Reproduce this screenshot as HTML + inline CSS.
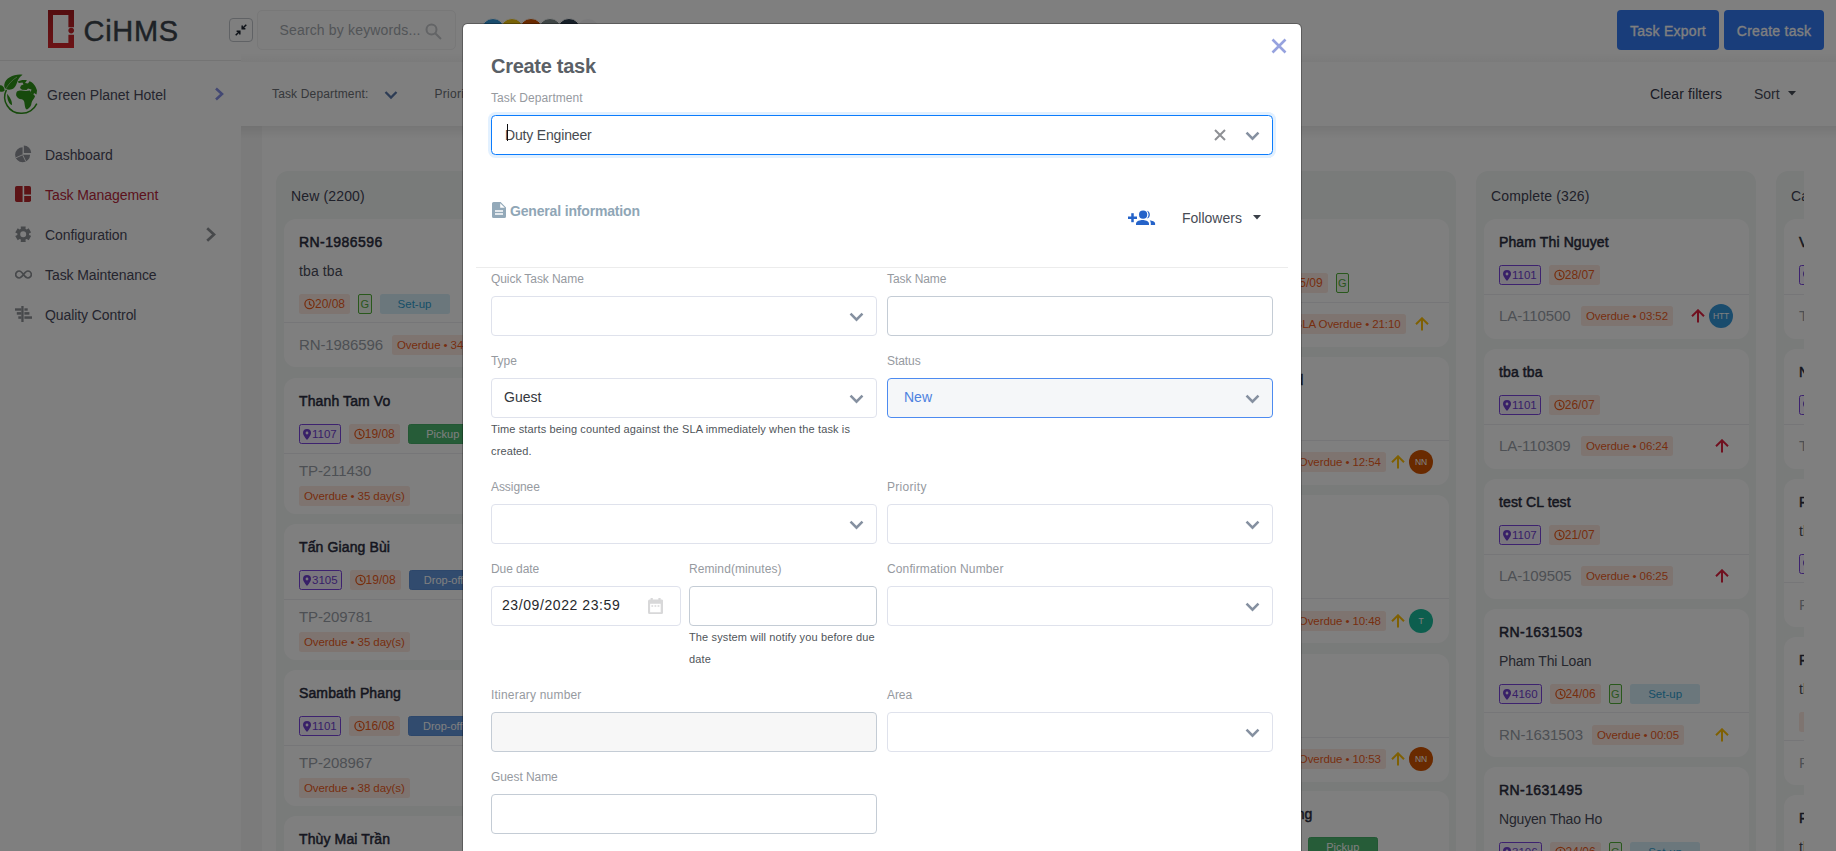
<!DOCTYPE html>
<html lang="en">
<head>
<meta charset="utf-8">
<title>CiHMS - Task Management</title>
<style>
*{box-sizing:border-box;margin:0;padding:0}
html,body{width:1836px;height:851px;overflow:hidden;background:#fff}
body{font-family:"Liberation Sans",sans-serif;font-size:14px;color:#34395e;position:relative}
.abs{position:absolute}
svg{display:block}
/* ---------- underlying app ---------- */
#app{position:absolute;left:0;top:0;width:1836px;height:851px;overflow:hidden;background:#fff}
#side{position:absolute;left:0;top:0;width:241px;height:851px;background:#fff}
#side .logo{position:absolute;left:0;top:0;width:241px;height:61px;border-bottom:1px solid #e9e9e9}
#side .brand{position:absolute;left:83.5px;top:12.6px;font-size:29px;line-height:36px;color:#3c454d;letter-spacing:.7px;-webkit-text-stroke:.45px #3c454d}
#side .hotel{position:absolute;left:47px;top:84.6px;line-height:20px;font-size:14px;color:#4a4a5c}
.nav{position:absolute;left:0;width:241px;height:40px}
.nav .ic{position:absolute;left:15px;top:12px;width:16px;height:16px}
.nav .tx{position:absolute;left:45px;top:10.6px;line-height:20px;font-size:14px;color:#4a4a5c;white-space:nowrap;letter-spacing:-.08px}
.nav.act .tx{color:#b8263a}
#top{position:absolute;left:241px;top:0;width:1595px;height:61px;background:#fff}
#top:after{content:"";position:absolute;left:0;top:52px;width:100%;height:10px;background:linear-gradient(rgba(0,0,0,0),rgba(0,0,0,.035))}
#filter{position:absolute;left:241px;top:62px;width:1595px;height:64px;background:#fff}
#filter:after{content:"";position:absolute;left:0;top:64px;width:100%;height:13px;background:linear-gradient(rgba(0,0,0,.075),rgba(0,0,0,0))}
.btn{position:absolute;top:10px;height:40px;border-radius:4px;background:#327af4;color:#fff;font-size:14px;line-height:42px;text-align:center;letter-spacing:.25px;-webkit-text-stroke:.3px #fff}
#board{position:absolute;left:262px;top:140px;width:1542px;height:711px;overflow:hidden;background:#fff}
.col{position:absolute;top:31px;width:280px;height:760px;border-radius:12px;background:#f3f6f5}
.col h4{position:absolute;left:15px;top:15px;font-size:14px;font-weight:400;line-height:20px;color:#3f4254;white-space:nowrap;letter-spacing:.15px}
.card{position:absolute;left:8px;width:265px;border-radius:12px;background:#fff;overflow:hidden}
.card .t{position:absolute;left:15px;top:13px;height:20px;line-height:20px;font-weight:400;font-size:14px;color:#2b2d3e;white-space:nowrap;letter-spacing:.12px;-webkit-text-stroke:.5px #2b2d3e}
.card .s{position:absolute;left:15px;top:42px;height:20px;line-height:20px;font-size:14px;color:#4a4c5a;white-space:nowrap;letter-spacing:-.18px}
.card .tags{position:absolute;left:15px;top:46px;height:20px;white-space:nowrap;font-size:0}
.card .hr{position:absolute;left:0;right:0;top:75px;height:1px;background:#ececf0}
.card .id{position:absolute;left:15px;top:87px;height:20px;line-height:20px;font-size:15px;color:#9aa0a8;white-space:nowrap;letter-spacing:-.1px}
.card .od{position:absolute;top:87px;left:97px}
.card.sub .tags{top:75px}
.card.sub .hr{top:103px}
.card.sub .id{top:116px}
.card.sub .od{top:116px}
.card.two .id{top:83px}
.card.two .od{top:108px;left:15px}
.tag{display:inline-block;vertical-align:top;height:20px;line-height:20px;font-size:12px;border-radius:2.5px;margin-right:8px;white-space:nowrap;text-align:center}
.tag svg{display:inline-block;vertical-align:top}
.tm,.ov{background:#fde9e1;color:#ee5d1d;padding:0 5px}
.ov{font-size:11.5px;letter-spacing:-.09px}
.tm svg{margin-top:4px;margin-right:0}
.lc{border:1px solid #7b45de;color:#7040d0;background:#f4effd;line-height:18px;padding:0 3px 0 3px;font-size:11.5px}
.lc svg{margin-top:4px;margin-right:1px}
.g{border:1px solid #52b038;color:#55ad40;background:#f0f8ec;width:13.5px;font-size:11px;line-height:18px;border-radius:2px}
.su{background:#d7eef9;color:#2e9fd0;width:70px;font-size:11.5px}
.pk{background:#4cb870;color:#fff;width:70px;font-size:11px;border:1px solid #46ae68;line-height:18px}
.do{background:#6296dc;color:#fff;width:70px;font-size:11px;border:1px solid #5a8ed6;line-height:18px}
.av{position:absolute;width:24px;height:24px;border-radius:50%;color:#fff;font-size:8.5px;line-height:24px;text-align:center;font-weight:400;letter-spacing:-.2px}
.ar{position:absolute;width:14px;height:14px}
/* ---------- backdrop + modal ---------- */
#backdrop{position:absolute;left:0;top:0;width:1836px;height:851px;background:rgba(0,0,0,.5)}
#modal{position:absolute;left:462px;top:23px;width:840px;height:900px;background:#fff;border:1px solid rgba(0,0,0,.27);border-radius:5.5px;background-clip:padding-box}
#modal .in{position:absolute;left:-463px;top:-24px;width:1836px;height:851px}
.lab{position:absolute;font-size:12px;line-height:16px;color:#969a9f;white-space:nowrap;letter-spacing:-.07px}
.inp{position:absolute;height:40px;border:1px solid #dfe2ec;border-radius:4px;background:#fff}
.inp.g2{border-color:#c4ccd5}
.inp .v{position:absolute;left:12px;top:8.3px;line-height:20px;font-size:14px;color:#34373c;white-space:nowrap}
.chev{position:absolute;right:12.5px;top:15px;width:15px;height:9.6px}
.help{position:absolute;font-size:11px;line-height:22px;color:#50555a;white-space:nowrap;letter-spacing:.13px}
</style>
</head>
<body>
<div id="app">
  <div id="side">
    <div class="logo">
      <svg class="abs" style="left:48px;top:10px" width="26" height="38" viewBox="0 0 26 38">
        <defs><linearGradient id="lg" x1="0" y1="0" x2="0" y2="1"><stop offset="0" stop-color="#a81c20"/><stop offset="1" stop-color="#d8262c"/></linearGradient></defs>
        <path fill="url(#lg)" fill-rule="evenodd" d="M0 0H26V17.3H20.4V5H5V33H20.4V24.7H26V38H0Z"/>
        <circle cx="23.2" cy="20.6" r="2.8" fill="#c42228"/>
      </svg>
      <div class="brand">CiHMS</div>
    </div>
    <svg class="abs" style="left:0;top:70px" width="48" height="48" viewBox="0 0 48 48">
      <path d="M6.4 19.8A16.3 16.3 0 0 0 21.3 43.3A16.3 16.3 0 0 0 36.8 33.6" fill="none" stroke="#2e9418" stroke-width="1.5"/>
      <g fill="#2e9418">
        <path d="M22.6 4.8C15 3.6 5.5 7.5 4.3 14.5C4 16.5 4.6 18.3 6 19C8.5 20.3 12 19.8 14 18C18 14.5 16 9.5 22.6 4.8Z"/>
        <path d="M0 15.2C2.5 15.2 4.6 17.2 4.6 20.5C3 22.2 1 22 0 21.5Z"/>
        <path d="M7.2 23.7C9.5 27 12.3 30.5 12 35C9.5 34.5 6.8 30 7.2 23.7Z"/>
        <path d="M17.5 11.8C20 10 24 9.6 27 10.3L25 13L28 13.5L29.5 11.2C33 12.5 36 16 37 20.5L36.5 24.5L34 23L33 26L30.5 22.5L31.5 19.5L28 18.5L26.5 20L22 19.8L20 18L21 15.5L23.5 14.5L22.5 12.5L19 13Z"/>
        <path d="M17 21.5C19 20 23 20.5 26 21L30 20.5L31.5 23.5C33 24.5 35 25.2 35 26.5C34 29 32 30.5 31.5 33C31.5 36 29.5 38 27 39.5C25 39 25 36 24.5 33.5C24.5 31.5 23.5 30 22 29.3C19.5 29.5 17 28 16.2 25.5C16 24 16.3 22.5 17 21.5Z"/>
      </g>
      <path d="M5.5 19.5C8 14.5 12 10 17 7" fill="none" stroke="#fff" stroke-width=".6" opacity=".75"/>
    </svg>
    <div class="hotel">Green Planet Hotel</div>
    <svg class="abs" style="left:214px;top:87px" width="10" height="14" viewBox="0 0 10 14"><path d="M2 1.5L8 7L2 12.5" fill="none" stroke="#8791e6" stroke-width="2.6"/></svg>

    <div class="nav" style="top:134px">
      <svg class="abs" style="left:14px;top:11px" width="19" height="18" viewBox="0 0 19 18"><g fill="#90939a"><path d="M8.6 9.8V2.3A7.5 7.5 0 1 0 16.1 9.8Z"/><path d="M9.8 7.9V.5A7.4 7.4 0 0 1 17.2 7.9Z"/></g><path d="M8.6 9.8L1.7 12.9M8.6 9.8L11.9 16.6" stroke="#fff" stroke-width=".9" fill="none"/></svg>
      <div class="tx">Dashboard</div>
    </div>
    <div class="nav act" style="top:174px">
      <svg class="ic" viewBox="0 0 16 16"><g fill="#b8262c"><path d="M1.8 0H7.6V16H1.8A1.8 1.8 0 0 1 0 14.2V1.8A1.8 1.8 0 0 1 1.8 0Z"/><path d="M9.2 0H14.2A1.8 1.8 0 0 1 16 1.8V8.4H9.2Z"/><path d="M9.2 10H16V14.2A1.8 1.8 0 0 1 14.2 16H9.2Z"/></g></svg>
      <div class="tx">Task Management</div>
    </div>
    <div class="nav" style="top:214px">
      <svg class="abs" style="left:14.8px;top:11.6px" width="16.4" height="16.4" viewBox="0 0 16.4 16.4"><path fill="#8f9297" fill-rule="evenodd" d="M5.90 2.77 L5.71 0.44 L10.69 0.44 L10.50 2.77 L11.76 3.49 L13.68 2.17 L16.16 6.47 L14.05 7.47 L14.05 8.93 L16.16 9.93 L13.68 14.23 L11.76 12.91 L10.50 13.63 L10.69 15.96 L5.71 15.96 L5.90 13.63 L4.64 12.91 L2.72 14.23 L0.24 9.93 L2.35 8.93 L2.35 7.47 L0.24 6.47 L2.72 2.17 L4.64 3.49ZM8.2 5.2A3 3 0 1 0 8.2 11.2A3 3 0 1 0 8.2 5.2Z"/></svg>
      <div class="tx">Configuration</div>
      <svg class="abs" style="left:205px;top:13px" width="12" height="15" viewBox="0 0 12 15"><path d="M2.2 1.2L9 7.5L2.2 13.8" fill="none" stroke="#8f9297" stroke-width="2.7"/></svg>
    </div>
    <div class="nav" style="top:254px">
      <svg class="abs" style="left:15px;top:15.5px" width="17" height="9" viewBox="0 0 17 9"><path fill="none" stroke="#8f9297" stroke-width="1.7" d="M8.5 4.5C7 2.4 5.7 1 4.2 1A3.5 3.5 0 0 0 4.2 8C6 8 7.2 6.3 8.5 4.5C9.8 2.7 11 1 12.8 1A3.5 3.5 0 0 1 12.8 8C11.3 8 10 6.6 8.5 4.5Z"/></svg>
      <div class="tx">Task Maintenance</div>
    </div>
    <div class="nav" style="top:294px">
      <svg class="abs" style="left:15px;top:12px" width="17" height="16" viewBox="0 0 17 16"><g fill="#8f9297"><rect x="6.3" y="0" width="2.3" height="16"/><rect x="0" y="2.3" width="6.4" height="2.4"/><rect x="1.8" y="6.1" width="4.6" height="2.6"/><rect x="3.3" y="10.3" width="3.1" height="2.5"/><rect x="9.4" y="2.3" width="3.3" height="2.4"/><rect x="9.4" y="6.1" width="5" height="2.6"/><rect x="9.4" y="10.3" width="7.6" height="2.5"/></g></svg>
      <div class="tx">Quality Control</div>
    </div>
  </div>
  <div id="top">
    <div class="abs" style="left:-12px;top:18px;width:24px;height:24px;border:1px solid #c0c5cb;border-radius:4px;background:#fff">
      <svg class="abs" style="left:5px;top:5px" width="12" height="12" viewBox="0 0 12 12"><g fill="none" stroke="#1d2430" stroke-width="1.5"><path d="M11.3 .7L7.2 4.8M7.2 1.6V4.8H10.4"/><path d="M.7 11.3L4.8 7.2M4.8 10.4V7.2H1.6"/></g></svg>
    </div>
    <div class="abs" style="left:15.5px;top:10px;width:199.5px;height:40px;border:1px solid #f0f0f1;border-radius:5px;background:#fdfdfd">
      <div class="abs" style="left:22px;top:9px;line-height:20px;font-size:14px;color:#a4a9af;white-space:nowrap;letter-spacing:.16px">Search by keywords...</div>
      <svg class="abs" style="left:167px;top:12px" width="17" height="17" viewBox="0 0 17 17"><g fill="none" stroke="#c6c9cc" stroke-width="2"><circle cx="6.5" cy="6.5" r="5"/><path d="M10.2 10.2L16 16"/></g></svg>
    </div>
    <div class="av" style="left:240px;top:18px;background:#3498db;border:1px solid #fff"></div>
    <div class="av" style="left:259px;top:18px;background:#f1c40f;border:1px solid #fff"></div>
    <div class="av" style="left:278px;top:18px;background:#d35400;border:1px solid #fff"></div>
    <div class="av" style="left:297px;top:18px;background:#7f8c8d;border:1px solid #fff"></div>
    <div class="av" style="left:316px;top:18px;background:#2c3e50;border:1px solid #fff"></div>
    <div class="av" style="left:335px;top:18px;background:#f4f4f6;border:1px solid #fff"></div>
    <div class="btn" style="left:1376px;width:102px">Task Export</div>
    <div class="btn" style="left:1483px;width:100px">Create task</div>
  </div>
  <div id="filter">
    <div class="abs" style="left:31px;top:24px;line-height:16px;font-size:12px;color:#6c7076;white-space:nowrap;letter-spacing:.15px">Task Department:</div>
    <svg class="abs" style="left:143px;top:28px" width="14" height="10" viewBox="0 0 14 10"><path d="M1.5 2L7 7.5L12.5 2" fill="none" stroke="#5a79aa" stroke-width="2.3"/></svg>
    <div class="abs" style="left:193.5px;top:24px;line-height:16px;font-size:12px;color:#6c7076;white-space:nowrap;letter-spacing:.3px">Priority:</div>
    <div class="abs" style="left:1409px;top:22px;line-height:20px;font-size:14px;color:#34374a;white-space:nowrap;letter-spacing:.1px">Clear filters</div>
    <div class="abs" style="left:1513px;top:22px;line-height:20px;font-size:14px;color:#4a4d5c;white-space:nowrap">Sort</div>
    <svg class="abs" style="left:1547px;top:29px" width="8" height="5" viewBox="0 0 8 5"><path d="M0 0H8L4 4.5Z" fill="#444a55"/></svg>
  </div>
  <div class="abs" style="left:241px;top:126px;width:21px;height:725px;background:rgba(0,0,0,.03)"></div>
  <div id="board">
<div class="col" style="left:14px"><h4>New (2200)</h4><div class="card sub" style="top:48px;height:147.5px"><div class="t" style="letter-spacing:.42px">RN-1986596</div><div class="s" style="letter-spacing:.12px">tba tba</div><div class="tags"><span class="tag tm"><svg width="11" height="12" viewBox="0 0 11 12"><g fill="none" stroke="currentColor" stroke-width="1.3"><circle cx="5.5" cy="6" r="4.6"/><path d="M5.5 3.2V6.2L7.6 7.6"/></g></svg>20/08</span><span class="tag g">G</span><span class="tag su">Set-up</span></div><div class="hr"></div><div class="id">RN-1986596</div><div class="od" style="left:108px"><span class="tag ov" style="margin:0">Overdue &bull; 34 day(s)</span></div></div><div class="card two" style="top:207px;height:136px"><div class="t">Thanh Tam Vo</div><div class="tags"><span class="tag lc"><svg width="8" height="11" viewBox="0 0 8 11"><path fill="currentColor" fill-rule="evenodd" d="M4 0A4 4 0 0 1 8 4C8 6.6 4 11 4 11C4 11 0 6.6 0 4A4 4 0 0 1 4 0ZM4 2.6A1.4 1.4 0 1 0 4 5.4A1.4 1.4 0 1 0 4 2.6Z"/></svg>1107</span><span class="tag tm"><svg width="11" height="12" viewBox="0 0 11 12"><g fill="none" stroke="currentColor" stroke-width="1.3"><circle cx="5.5" cy="6" r="4.6"/><path d="M5.5 3.2V6.2L7.6 7.6"/></g></svg>19/08</span><span class="tag pk">Pickup</span></div><div class="hr"></div><div class="id">TP-211430</div><div class="od"><span class="tag ov" style="margin:0">Overdue &bull; 35 day(s)</span></div></div><div class="card two" style="top:353px;height:136px"><div class="t">Tấn Giang Bùi</div><div class="tags"><span class="tag lc"><svg width="8" height="11" viewBox="0 0 8 11"><path fill="currentColor" fill-rule="evenodd" d="M4 0A4 4 0 0 1 8 4C8 6.6 4 11 4 11C4 11 0 6.6 0 4A4 4 0 0 1 4 0ZM4 2.6A1.4 1.4 0 1 0 4 5.4A1.4 1.4 0 1 0 4 2.6Z"/></svg>3105</span><span class="tag tm"><svg width="11" height="12" viewBox="0 0 11 12"><g fill="none" stroke="currentColor" stroke-width="1.3"><circle cx="5.5" cy="6" r="4.6"/><path d="M5.5 3.2V6.2L7.6 7.6"/></g></svg>19/08</span><span class="tag do">Drop-off</span></div><div class="hr"></div><div class="id">TP-209781</div><div class="od"><span class="tag ov" style="margin:0">Overdue &bull; 35 day(s)</span></div></div><div class="card two" style="top:499px;height:136px"><div class="t">Sambath Phang</div><div class="tags"><span class="tag lc"><svg width="8" height="11" viewBox="0 0 8 11"><path fill="currentColor" fill-rule="evenodd" d="M4 0A4 4 0 0 1 8 4C8 6.6 4 11 4 11C4 11 0 6.6 0 4A4 4 0 0 1 4 0ZM4 2.6A1.4 1.4 0 1 0 4 5.4A1.4 1.4 0 1 0 4 2.6Z"/></svg>1101</span><span class="tag tm"><svg width="11" height="12" viewBox="0 0 11 12"><g fill="none" stroke="currentColor" stroke-width="1.3"><circle cx="5.5" cy="6" r="4.6"/><path d="M5.5 3.2V6.2L7.6 7.6"/></g></svg>16/08</span><span class="tag do">Drop-off</span></div><div class="hr"></div><div class="id">TP-208967</div><div class="od"><span class="tag ov" style="margin:0">Overdue &bull; 38 day(s)</span></div></div><div class="card two" style="top:645px;height:136px"><div class="t">Thùy Mai Trần</div><div class="tags"><span class="tag lc"><svg width="8" height="11" viewBox="0 0 8 11"><path fill="currentColor" fill-rule="evenodd" d="M4 0A4 4 0 0 1 8 4C8 6.6 4 11 4 11C4 11 0 6.6 0 4A4 4 0 0 1 4 0ZM4 2.6A1.4 1.4 0 1 0 4 5.4A1.4 1.4 0 1 0 4 2.6Z"/></svg>2104</span><span class="tag tm"><svg width="11" height="12" viewBox="0 0 11 12"><g fill="none" stroke="currentColor" stroke-width="1.3"><circle cx="5.5" cy="6" r="4.6"/><path d="M5.5 3.2V6.2L7.6 7.6"/></g></svg>15/08</span><span class="tag pk">Pickup</span></div><div class="hr"></div><div class="id">TP-208811</div><div class="od"><span class="tag ov" style="margin:0">Overdue &bull; 39 day(s)</span></div></div></div>
<div class="col" style="left:314px"><h4>Assigned (12)</h4></div>
<div class="col" style="left:614px"><h4>In progress (8)</h4></div>
<div class="col" style="left:914px"><h4>Pending (41)</h4><div class="card" style="top:48px;height:127.5px"><div class="t">Le Van Hoang</div><div class="tags" style="top:54px;left:42px"><span class="tag lc"><svg width="8" height="11" viewBox="0 0 8 11"><path fill="currentColor" fill-rule="evenodd" d="M4 0A4 4 0 0 1 8 4C8 6.6 4 11 4 11C4 11 0 6.6 0 4A4 4 0 0 1 4 0ZM4 2.6A1.4 1.4 0 1 0 4 5.4A1.4 1.4 0 1 0 4 2.6Z"/></svg>2208</span><span class="tag tm"><svg width="11" height="12" viewBox="0 0 11 12"><g fill="none" stroke="currentColor" stroke-width="1.3"><circle cx="5.5" cy="6" r="4.6"/><path d="M5.5 3.2V6.2L7.6 7.6"/></g></svg>15/09</span><span class="tag g">G</span></div><div class="hr" style="top:83px"></div><div class="id" style="top:95px">RN-2014</div><div class="od" style="top:95px;left:auto;right:43.5px"><span class="tag ov" style="margin:0">SLA Overdue &bull; 21:10</span></div><svg class="ar" style="left:231px;top:98px" viewBox="0 0 14 14"><path d="M7 13.5V1.5M1 7.2L7 1.3L13 7.2" fill="none" stroke="#ffc107" stroke-width="2"/></svg></div><div class="card" style="top:186px;height:127.5px"><div class="t" style="left:auto;right:145.5px">Minh Anh Do and</div><div class="tags" style="top:54px"><span class="tag lc"><svg width="8" height="11" viewBox="0 0 8 11"><path fill="currentColor" fill-rule="evenodd" d="M4 0A4 4 0 0 1 8 4C8 6.6 4 11 4 11C4 11 0 6.6 0 4A4 4 0 0 1 4 0ZM4 2.6A1.4 1.4 0 1 0 4 5.4A1.4 1.4 0 1 0 4 2.6Z"/></svg>1205</span><span class="tag tm"><svg width="11" height="12" viewBox="0 0 11 12"><g fill="none" stroke="currentColor" stroke-width="1.3"><circle cx="5.5" cy="6" r="4.6"/><path d="M5.5 3.2V6.2L7.6 7.6"/></g></svg>14/09</span></div><div class="hr" style="top:83px"></div><div class="id" style="top:95px">LA-1128</div><div class="od" style="top:95px;left:auto;right:63.2px"><span class="tag ov" style="margin:0">Overdue &bull; 12:54</span></div><div class="av" style="left:225px;top:93px;background:#d35400">NN</div><svg class="ar" style="left:207px;top:98px" viewBox="0 0 14 14"><path d="M7 13.5V1.5M1 7.2L7 1.3L13 7.2" fill="none" stroke="#ffc107" stroke-width="2"/></svg></div><div class="card sub" style="top:324px;height:147.5px"><div class="t" style="letter-spacing:.42px">RN-2011187</div><div class="s">Tran Van Long</div><div class="tags"><span class="tag lc"><svg width="8" height="11" viewBox="0 0 8 11"><path fill="currentColor" fill-rule="evenodd" d="M4 0A4 4 0 0 1 8 4C8 6.6 4 11 4 11C4 11 0 6.6 0 4A4 4 0 0 1 4 0ZM4 2.6A1.4 1.4 0 1 0 4 5.4A1.4 1.4 0 1 0 4 2.6Z"/></svg>3301</span><span class="tag tm"><svg width="11" height="12" viewBox="0 0 11 12"><g fill="none" stroke="currentColor" stroke-width="1.3"><circle cx="5.5" cy="6" r="4.6"/><path d="M5.5 3.2V6.2L7.6 7.6"/></g></svg>13/09</span></div><div class="hr"></div><div class="id">RN-2011</div><div class="od" style="left:auto;right:63.2px"><span class="tag ov" style="margin:0">Overdue &bull; 10:48</span></div><div class="av" style="left:225px;top:114px;background:#1abc9c">T</div><svg class="ar" style="left:207px;top:119px" viewBox="0 0 14 14"><path d="M7 13.5V1.5M1 7.2L7 1.3L13 7.2" fill="none" stroke="#ffc107" stroke-width="2"/></svg></div><div class="card" style="top:483px;height:127.5px"><div class="t">Quoc Bao</div><div class="tags" style="top:54px"><span class="tag lc"><svg width="8" height="11" viewBox="0 0 8 11"><path fill="currentColor" fill-rule="evenodd" d="M4 0A4 4 0 0 1 8 4C8 6.6 4 11 4 11C4 11 0 6.6 0 4A4 4 0 0 1 4 0ZM4 2.6A1.4 1.4 0 1 0 4 5.4A1.4 1.4 0 1 0 4 2.6Z"/></svg>1402</span><span class="tag tm"><svg width="11" height="12" viewBox="0 0 11 12"><g fill="none" stroke="currentColor" stroke-width="1.3"><circle cx="5.5" cy="6" r="4.6"/><path d="M5.5 3.2V6.2L7.6 7.6"/></g></svg>13/09</span></div><div class="hr" style="top:83px"></div><div class="id" style="top:95px">LA-1127</div><div class="od" style="top:95px;left:auto;right:63.2px"><span class="tag ov" style="margin:0">Overdue &bull; 10:53</span></div><div class="av" style="left:225px;top:93px;background:#d35400">NN</div><svg class="ar" style="left:207px;top:98px" viewBox="0 0 14 14"><path d="M7 13.5V1.5M1 7.2L7 1.3L13 7.2" fill="none" stroke="#ffc107" stroke-width="2"/></svg></div><div class="card two" style="top:620px;height:136px"><div class="t" style="left:auto;right:136.5px">Thi Thu Hương Dang</div><div class="tags"><span class="tag lc"><svg width="8" height="11" viewBox="0 0 8 11"><path fill="currentColor" fill-rule="evenodd" d="M4 0A4 4 0 0 1 8 4C8 6.6 4 11 4 11C4 11 0 6.6 0 4A4 4 0 0 1 4 0ZM4 2.6A1.4 1.4 0 1 0 4 5.4A1.4 1.4 0 1 0 4 2.6Z"/></svg>1107</span><span class="tag tm"><svg width="11" height="12" viewBox="0 0 11 12"><g fill="none" stroke="currentColor" stroke-width="1.3"><circle cx="5.5" cy="6" r="4.6"/><path d="M5.5 3.2V6.2L7.6 7.6"/></g></svg>12/09</span><span class="tag pk">Pickup</span></div><div class="hr"></div><div class="id">TP-214</div></div></div>
<div class="col" style="left:1214px"><h4>Complete (326)</h4><div class="card" style="top:48px;height:119.5px"><div class="t">Pham Thi Nguyet</div><div class="tags"><span class="tag lc"><svg width="8" height="11" viewBox="0 0 8 11"><path fill="currentColor" fill-rule="evenodd" d="M4 0A4 4 0 0 1 8 4C8 6.6 4 11 4 11C4 11 0 6.6 0 4A4 4 0 0 1 4 0ZM4 2.6A1.4 1.4 0 1 0 4 5.4A1.4 1.4 0 1 0 4 2.6Z"/></svg>1101</span><span class="tag tm"><svg width="11" height="12" viewBox="0 0 11 12"><g fill="none" stroke="currentColor" stroke-width="1.3"><circle cx="5.5" cy="6" r="4.6"/><path d="M5.5 3.2V6.2L7.6 7.6"/></g></svg>28/07</span></div><div class="hr"></div><div class="id">LA-110500</div><div class="od"><span class="tag ov" style="margin:0">Overdue &bull; 03:52</span></div><div class="av" style="left:225px;top:85px;background:#3498db">HTT</div><svg class="ar" style="left:207px;top:90px" viewBox="0 0 14 14"><path d="M7 13.5V1.5M1 7.2L7 1.3L13 7.2" fill="none" stroke="#e0213f" stroke-width="2"/></svg></div><div class="card" style="top:178px;height:119.5px"><div class="t">tba tba</div><div class="tags"><span class="tag lc"><svg width="8" height="11" viewBox="0 0 8 11"><path fill="currentColor" fill-rule="evenodd" d="M4 0A4 4 0 0 1 8 4C8 6.6 4 11 4 11C4 11 0 6.6 0 4A4 4 0 0 1 4 0ZM4 2.6A1.4 1.4 0 1 0 4 5.4A1.4 1.4 0 1 0 4 2.6Z"/></svg>1101</span><span class="tag tm"><svg width="11" height="12" viewBox="0 0 11 12"><g fill="none" stroke="currentColor" stroke-width="1.3"><circle cx="5.5" cy="6" r="4.6"/><path d="M5.5 3.2V6.2L7.6 7.6"/></g></svg>26/07</span></div><div class="hr"></div><div class="id">LA-110309</div><div class="od"><span class="tag ov" style="margin:0">Overdue &bull; 06:24</span></div><svg class="ar" style="left:231px;top:90px" viewBox="0 0 14 14"><path d="M7 13.5V1.5M1 7.2L7 1.3L13 7.2" fill="none" stroke="#e0213f" stroke-width="2"/></svg></div><div class="card" style="top:308px;height:119.5px"><div class="t">test CL test</div><div class="tags"><span class="tag lc"><svg width="8" height="11" viewBox="0 0 8 11"><path fill="currentColor" fill-rule="evenodd" d="M4 0A4 4 0 0 1 8 4C8 6.6 4 11 4 11C4 11 0 6.6 0 4A4 4 0 0 1 4 0ZM4 2.6A1.4 1.4 0 1 0 4 5.4A1.4 1.4 0 1 0 4 2.6Z"/></svg>1107</span><span class="tag tm"><svg width="11" height="12" viewBox="0 0 11 12"><g fill="none" stroke="currentColor" stroke-width="1.3"><circle cx="5.5" cy="6" r="4.6"/><path d="M5.5 3.2V6.2L7.6 7.6"/></g></svg>21/07</span></div><div class="hr"></div><div class="id">LA-109505</div><div class="od"><span class="tag ov" style="margin:0">Overdue &bull; 06:25</span></div><svg class="ar" style="left:231px;top:90px" viewBox="0 0 14 14"><path d="M7 13.5V1.5M1 7.2L7 1.3L13 7.2" fill="none" stroke="#e0213f" stroke-width="2"/></svg></div><div class="card sub" style="top:438px;height:147.5px"><div class="t" style="letter-spacing:.42px">RN-1631503</div><div class="s">Pham Thi Loan</div><div class="tags"><span class="tag lc"><svg width="8" height="11" viewBox="0 0 8 11"><path fill="currentColor" fill-rule="evenodd" d="M4 0A4 4 0 0 1 8 4C8 6.6 4 11 4 11C4 11 0 6.6 0 4A4 4 0 0 1 4 0ZM4 2.6A1.4 1.4 0 1 0 4 5.4A1.4 1.4 0 1 0 4 2.6Z"/></svg>4160</span><span class="tag tm"><svg width="11" height="12" viewBox="0 0 11 12"><g fill="none" stroke="currentColor" stroke-width="1.3"><circle cx="5.5" cy="6" r="4.6"/><path d="M5.5 3.2V6.2L7.6 7.6"/></g></svg>24/06</span><span class="tag g">G</span><span class="tag su">Set-up</span></div><div class="hr"></div><div class="id">RN-1631503</div><div class="od" style="left:108px"><span class="tag ov" style="margin:0">Overdue &bull; 00:05</span></div><svg class="ar" style="left:231px;top:119px" viewBox="0 0 14 14"><path d="M7 13.5V1.5M1 7.2L7 1.3L13 7.2" fill="none" stroke="#ffc107" stroke-width="2"/></svg></div><div class="card sub" style="top:596px;height:147.5px"><div class="t" style="letter-spacing:.42px">RN-1631495</div><div class="s">Nguyen Thao Ho</div><div class="tags"><span class="tag lc"><svg width="8" height="11" viewBox="0 0 8 11"><path fill="currentColor" fill-rule="evenodd" d="M4 0A4 4 0 0 1 8 4C8 6.6 4 11 4 11C4 11 0 6.6 0 4A4 4 0 0 1 4 0ZM4 2.6A1.4 1.4 0 1 0 4 5.4A1.4 1.4 0 1 0 4 2.6Z"/></svg>3106</span><span class="tag tm"><svg width="11" height="12" viewBox="0 0 11 12"><g fill="none" stroke="currentColor" stroke-width="1.3"><circle cx="5.5" cy="6" r="4.6"/><path d="M5.5 3.2V6.2L7.6 7.6"/></g></svg>24/06</span><span class="tag g">G</span><span class="tag su">Set-up</span></div><div class="hr"></div><div class="id">RN-1631495</div><div class="od" style="left:108px"><span class="tag ov" style="margin:0">Overdue &bull; 00:07</span></div><svg class="ar" style="left:231px;top:119px" viewBox="0 0 14 14"><path d="M7 13.5V1.5M1 7.2L7 1.3L13 7.2" fill="none" stroke="#ffc107" stroke-width="2"/></svg></div></div>
<div class="col" style="left:1514px"><h4>Cancelled (57)</h4><div class="card" style="top:48px;height:119.5px"><div class="t">Vo Thi Hoa</div><div class="tags"><span class="tag lc"><svg width="8" height="11" viewBox="0 0 8 11"><path fill="currentColor" fill-rule="evenodd" d="M4 0A4 4 0 0 1 8 4C8 6.6 4 11 4 11C4 11 0 6.6 0 4A4 4 0 0 1 4 0ZM4 2.6A1.4 1.4 0 1 0 4 5.4A1.4 1.4 0 1 0 4 2.6Z"/></svg>1101</span><span class="tag tm"><svg width="11" height="12" viewBox="0 0 11 12"><g fill="none" stroke="currentColor" stroke-width="1.3"><circle cx="5.5" cy="6" r="4.6"/><path d="M5.5 3.2V6.2L7.6 7.6"/></g></svg>28/07</span></div><div class="hr"></div><div class="id">TP-2091</div></div><div class="card" style="top:178px;height:119.5px"><div class="t">Nguyen Van A</div><div class="tags"><span class="tag lc"><svg width="8" height="11" viewBox="0 0 8 11"><path fill="currentColor" fill-rule="evenodd" d="M4 0A4 4 0 0 1 8 4C8 6.6 4 11 4 11C4 11 0 6.6 0 4A4 4 0 0 1 4 0ZM4 2.6A1.4 1.4 0 1 0 4 5.4A1.4 1.4 0 1 0 4 2.6Z"/></svg>1101</span><span class="tag tm"><svg width="11" height="12" viewBox="0 0 11 12"><g fill="none" stroke="currentColor" stroke-width="1.3"><circle cx="5.5" cy="6" r="4.6"/><path d="M5.5 3.2V6.2L7.6 7.6"/></g></svg>26/07</span></div><div class="hr"></div><div class="id">TP-2088</div></div><div class="card sub" style="top:308px;height:147.5px"><div class="t" style="letter-spacing:.42px">RN-1631480</div><div class="s" style="letter-spacing:.12px">tba tba</div><div class="tags"><span class="tag lc"><svg width="8" height="11" viewBox="0 0 8 11"><path fill="currentColor" fill-rule="evenodd" d="M4 0A4 4 0 0 1 8 4C8 6.6 4 11 4 11C4 11 0 6.6 0 4A4 4 0 0 1 4 0ZM4 2.6A1.4 1.4 0 1 0 4 5.4A1.4 1.4 0 1 0 4 2.6Z"/></svg>1107</span><span class="tag tm"><svg width="11" height="12" viewBox="0 0 11 12"><g fill="none" stroke="currentColor" stroke-width="1.3"><circle cx="5.5" cy="6" r="4.6"/><path d="M5.5 3.2V6.2L7.6 7.6"/></g></svg>21/07</span></div><div class="hr"></div><div class="id">RN-1631480</div></div><div class="card sub" style="top:466px;height:147.5px"><div class="t" style="letter-spacing:.42px">RN-1631472</div><div class="s" style="letter-spacing:.12px">tba tba</div><div class="tags"><span class="tag tm"><svg width="11" height="12" viewBox="0 0 11 12"><g fill="none" stroke="currentColor" stroke-width="1.3"><circle cx="5.5" cy="6" r="4.6"/><path d="M5.5 3.2V6.2L7.6 7.6"/></g></svg>24/06</span></div><div class="hr"></div><div class="id">RN-1631472</div></div><div class="card sub" style="top:624px;height:147.5px"><div class="t" style="letter-spacing:.42px">RN-1631466</div><div class="s" style="letter-spacing:.12px">tba tba</div><div class="tags"><span class="tag tm"><svg width="11" height="12" viewBox="0 0 11 12"><g fill="none" stroke="currentColor" stroke-width="1.3"><circle cx="5.5" cy="6" r="4.6"/><path d="M5.5 3.2V6.2L7.6 7.6"/></g></svg>24/06</span></div><div class="hr"></div><div class="id">RN-1631466</div></div></div>
</div>
</div>
<div id="backdrop"></div>
<div id="modal"><div class="in">
  <svg class="abs" style="left:1271px;top:38px" width="16" height="16" viewBox="0 0 16 16"><path d="M1.5 1.5L14.5 14.5M14.5 1.5L1.5 14.5" fill="none" stroke="#96a2de" stroke-width="2.6"/></svg>
  <div class="abs" style="left:491px;top:54px;font-size:20px;line-height:24px;font-weight:700;color:#5a6066;white-space:nowrap;letter-spacing:-.28px">Create task</div>
<div class="lab" style="left:491px;top:90px;letter-spacing:.07px">Task Department</div>  <div class="abs" style="left:491px;top:115px;width:782px;height:40px;border:1px solid #0b7cfd;border-radius:4.5px;background:#fff;box-shadow:0 0 0 3px rgba(0,123,255,.11)">
    <div class="abs" style="left:13px;top:8.5px;line-height:20px;font-size:14px;color:#474b50;white-space:nowrap;letter-spacing:-.17px">Duty Engineer</div>
    <div class="abs" style="left:14.8px;top:7.5px;width:1.2px;height:17px;background:#0c0d10"></div>
    <svg class="abs" style="left:722px;top:13px" width="12" height="12" viewBox="0 0 12 12"><path d="M1 1L11 11M11 1L1 11" fill="none" stroke="#8e9094" stroke-width="2"/></svg>
    <svg class="abs" style="left:752.5px;top:15px" width="15" height="9.6" viewBox="0 0 14 9"><path d="M1.4 1.6L7 7.2L12.6 1.6" fill="none" stroke="#8590a0" stroke-width="2.4"/></svg>
  </div>
  <svg class="abs" style="left:492px;top:202px" width="14" height="16" viewBox="0 0 14 16"><path fill="#93a9b9" fill-rule="evenodd" d="M1.6 0H8.6L14 5.4V14.4A1.6 1.6 0 0 1 12.4 16H1.6A1.6 1.6 0 0 1 0 14.4V1.6A1.6 1.6 0 0 1 1.6 0ZM8.2 1.2V5.8H12.8ZM3 8.2H11V9.7H3ZM3 11.2H11V12.7H3Z"/></svg>
  <div class="abs" style="left:510px;top:201px;line-height:20px;font-size:14px;font-weight:700;color:#8fa6b6;white-space:nowrap;letter-spacing:-.17px">General information</div>
  <svg class="abs" style="left:1128px;top:210px" width="28" height="16" viewBox="0 0 28 16"><g fill="#2563c9"><rect x="0" y="6.5" width="9" height="2.5"/><rect x="3.25" y="3.2" width="2.5" height="9"/><circle cx="15.1" cy="4.7" r="4.1"/><path d="M8 15V13.4C8 11 12.3 9.9 14.5 9.9C16.7 9.9 21 11 21 13.4V15Z"/><path d="M19 .8A4.1 4.1 0 0 1 19 8.6A6.2 6.2 0 0 0 19 .8Z"/><path d="M21.6 10.2C24.2 10.6 27.1 11.7 27.1 13.4V15H22.8V13.4C22.8 12 22.3 10.9 21.6 10.2Z"/></g></svg>
  <div class="abs" style="left:1182px;top:208px;line-height:20px;font-size:14px;color:#474b55;white-space:nowrap">Followers</div>
  <svg class="abs" style="left:1253px;top:215px" width="8" height="5" viewBox="0 0 8 5"><path d="M0 0H8L4 4.5Z" fill="#3a3f48"/></svg>
  <div class="abs" style="left:476px;top:267px;width:812px;height:1px;background:#ececec"></div>
<div class="lab" style="left:491px;top:271px">Quick Task Name</div><div class="lab" style="left:887px;top:271px">Task Name</div><div class="inp" style="left:491px;top:296px;width:386px;"><svg class="chev" viewBox="0 0 14 9"><path d="M1.4 1.6L7 7.2L12.6 1.6" fill="none" stroke="#8590a0" stroke-width="2.4"/></svg></div><div class="inp g2" style="left:887px;top:296px;width:386px;"></div><div class="lab" style="left:491px;top:353px">Type</div><div class="lab" style="left:887px;top:353px">Status</div><div class="inp" style="left:491px;top:378px;width:386px;"><div class="v">Guest</div><svg class="chev" viewBox="0 0 14 9"><path d="M1.4 1.6L7 7.2L12.6 1.6" fill="none" stroke="#8590a0" stroke-width="2.4"/></svg></div><div class="inp" style="left:887px;top:378px;width:386px;border-color:#4d8bf0;background:#f5f7f9"><div class="v" style="left:16px;color:#4d82e0">New</div><svg class="chev" viewBox="0 0 14 9"><path d="M1.4 1.6L7 7.2L12.6 1.6" fill="none" stroke="#8590a0" stroke-width="2.4"/></svg></div><div class="help" style="left:491px;top:418px">Time starts being counted against the SLA immediately when the task is<br>created.</div><div class="lab" style="left:491px;top:479px">Assignee</div><div class="lab" style="left:887px;top:479px;letter-spacing:0.3px">Priority</div><div class="inp" style="left:491px;top:504px;width:386px;"><svg class="chev" viewBox="0 0 14 9"><path d="M1.4 1.6L7 7.2L12.6 1.6" fill="none" stroke="#8590a0" stroke-width="2.4"/></svg></div><div class="inp" style="left:887px;top:504px;width:386px;"><svg class="chev" viewBox="0 0 14 9"><path d="M1.4 1.6L7 7.2L12.6 1.6" fill="none" stroke="#8590a0" stroke-width="2.4"/></svg></div><div class="lab" style="left:491px;top:561px">Due date</div><div class="lab" style="left:689px;top:561px;letter-spacing:0.09px">Remind(minutes)</div><div class="lab" style="left:887px;top:561px;letter-spacing:0.13px">Confirmation Number</div><div class="inp" style="left:491px;top:586px;width:190px;"><div class="v" style="left:10px;color:#26282c;letter-spacing:.58px">23/09/2022 23:59</div><svg class="abs" style="left:155.7px;top:11px" width="15.2" height="16" viewBox="0 0 15.2 16"><path fill="#d8d8d9" fill-rule="evenodd" d="M2.6 0H4.8V1.6H10.4V0H12.6V1.6H13.6A1.6 1.6 0 0 1 15.2 3.2V14.4A1.6 1.6 0 0 1 13.6 16H1.6A1.6 1.6 0 0 1 0 14.4V3.2A1.6 1.6 0 0 1 1.6 1.6H2.6ZM2.1 5.8V14.2H12.7V5.8ZM3.4 7.3H5.2V8.7H3.4ZM6.5 7.3H8.3V8.7H6.5ZM9.6 7.3H11.4V8.7H9.6Z"/></svg></div><div class="inp g2" style="left:689px;top:586px;width:188px;"></div><div class="inp" style="left:887px;top:586px;width:386px;"><svg class="chev" viewBox="0 0 14 9"><path d="M1.4 1.6L7 7.2L12.6 1.6" fill="none" stroke="#8590a0" stroke-width="2.4"/></svg></div><div class="help" style="left:689px;top:626px">The system will notify you before due<br>date</div><div class="lab" style="left:491px;top:687px;letter-spacing:0.2px">Itinerary number</div><div class="lab" style="left:887px;top:687px">Area</div><div class="inp g2" style="left:491px;top:712px;width:386px;background:#f7f7f7"></div><div class="inp" style="left:887px;top:712px;width:386px;"><svg class="chev" viewBox="0 0 14 9"><path d="M1.4 1.6L7 7.2L12.6 1.6" fill="none" stroke="#8590a0" stroke-width="2.4"/></svg></div><div class="lab" style="left:491px;top:769px">Guest Name</div><div class="inp g2" style="left:491px;top:794px;width:386px;"></div></div></div>
</body>
</html>
